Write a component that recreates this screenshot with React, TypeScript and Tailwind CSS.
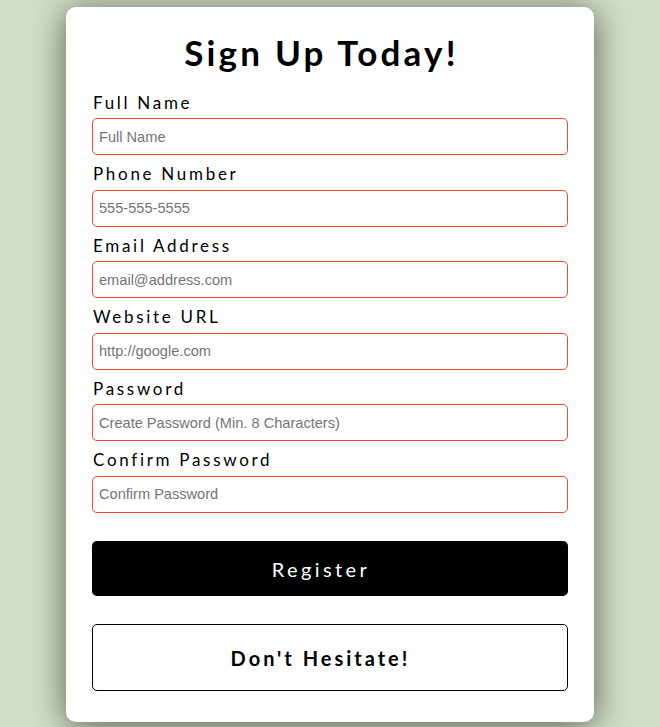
const fields = [
  { label: 'Full Name', placeholder: 'Full Name', type: 'text' },
  { label: 'Phone Number', placeholder: '555-555-5555', type: 'tel' },
  { label: 'Email Address', placeholder: 'email@address.com', type: 'email' },
  { label: 'Website URL', placeholder: 'http://google.com', type: 'url' },
  { label: 'Password', placeholder: 'Create Password (Min. 8 Characters)', type: 'password' },
  { label: 'Confirm Password', placeholder: 'Confirm Password', type: 'password' },
];

export default function App() {
  return (
    <div className="min-h-screen bg-[#d3dec8] flex justify-center pt-[7px] pb-[5px] font-['Lato',sans-serif]">
      <div className="w-[528px] bg-white rounded-[10px] shadow-[0_4px_34px_rgba(30,40,20,0.7)] px-[26px] pt-[21px] pb-[31px]">
        <h1 className="text-center text-[35px] leading-[48px] font-bold tracking-[3.2px] text-black mb-[16.5px] pr-[17px]">
          Sign Up Today!
        </h1>
        <form className="flex flex-col" onSubmit={(e) => e.preventDefault()}>
          {fields.map((f) => (
            <div key={f.label} className="flex flex-col mb-[9px]">
              <label className="text-[17px] leading-[20px] tracking-[2.7px] text-black pl-[1px] mb-[5.5px]">
                {f.label}
              </label>
              <input
                type={f.type}
                placeholder={f.placeholder}
                className="h-[37px] border border-[#ee4b2b] rounded-[5px] px-[6px] text-[14.6px] font-['Liberation_Sans',Arial,sans-serif] placeholder:text-[#757575] outline-none"
              />
            </div>
          ))}
          <button
            type="submit"
            className="mt-[19.5px] h-[55px] bg-black text-white rounded-[5px] text-[20px] tracking-[3.4px] pr-[18px]"
          >
            Register
          </button>
          <div className="mt-[28px] h-[67px] border border-black rounded-[5px] flex items-center justify-center text-[20px] font-bold tracking-[3px] text-black pr-[19px]">
            Don't Hesitate!
          </div>
        </form>
      </div>
    </div>
  );
}
